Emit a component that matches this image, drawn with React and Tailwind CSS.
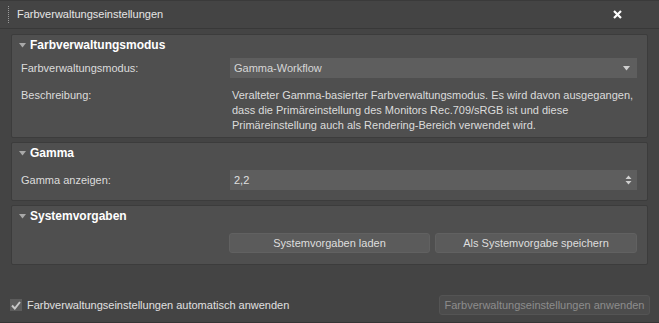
import React from "react";

const font = { fontFamily: '"Liberation Sans", Arial, sans-serif' };

function Tri() {
  return (
    <svg width="7" height="5" viewBox="0 0 7 5" className="shrink-0">
      <path d="M0 0 H7 L3.5 4.5 Z" fill="#a8a8a8" />
    </svg>
  );
}

function Header({ children }) {
  return (
    <div className="h-[20px] flex items-center pl-[7px] gap-[4px]">
      <Tri />
      <span className="text-[12px] font-bold text-white leading-none">{children}</span>
    </div>
  );
}

function Panel({ children, className = "" }) {
  return (
    <div className={"bg-[#4f4f4f] rounded-[2px] border border-[#3c3c3c] " + className}>{children}</div>
  );
}

export default function App() {
  return (
    <div
      className="w-[659px] h-[323px] bg-[#444444] flex flex-col border-t border-[#3a3a3a] border-b border-b-[#353535] text-[#dcdcdc] text-[11px] overflow-hidden whitespace-nowrap"
      style={font}
    >
      {/* Title bar */}
      <div className="h-[28px] flex items-center border-b border-[#383838] relative shrink-0">
        <div className="ml-[8px] w-[1px] h-[17px] border-l border-dotted border-[#9a9a9a]" />
        <span className="ml-[8px] text-[11px] text-[#e6e6e6]">Farbverwaltungseinstellungen</span>
        <div className="ml-auto mr-[37px]">
          <svg width="9" height="9" viewBox="0 0 9 9">
            <path d="M1 1 L8 8 M8 1 L1 8" stroke="#ffffff" strokeWidth="2.2" />
          </svg>
        </div>
      </div>

      <div className="px-[11px] pt-[5px] flex flex-col gap-[4px]">
        {/* Panel 1 */}
        <Panel className="h-[104px]">
          <Header>Farbverwaltungsmodus</Header>
          <div className="flex items-center h-[20px] mt-[3px] pl-[9px] pr-[10px]">
            <span className="w-[209px]">Farbverwaltungsmodus:</span>
            <div className="flex-1 h-[20px] bg-[#5e5e5e] flex items-center pl-[4px] pr-[7px] text-[#d6d6d6]">
              <span>Gamma-Workflow</span>
              <svg width="7" height="5" viewBox="0 0 7 5" className="ml-auto">
                <path d="M0 0 H7 L3.5 4.5 Z" fill="#cfcfcf" />
              </svg>
            </div>
          </div>
          <div className="flex pl-[9px] pr-[10px] mt-[10px]">
            <span className="w-[211px] leading-[15px]">Beschreibung:</span>
            <p className="flex-1 leading-[15px] text-[#dcdcdc]">
              Veralteter Gamma-basierter Farbverwaltungsmodus. Es wird davon ausgegangen,
              <br />
              dass die Primäreinstellung des Monitors Rec.709/sRGB ist und diese
              <br />
              Primäreinstellung auch als Rendering-Bereich verwendet wird.
            </p>
          </div>
        </Panel>

        {/* Panel 2 */}
        <Panel className="h-[59px]">
          <Header>Gamma</Header>
          <div className="flex items-center h-[20px] mt-[7px] pl-[9px] pr-[10px]">
            <span className="w-[209px]">Gamma anzeigen:</span>
            <div className="flex-1 h-[20px] bg-[#5e5e5e] flex items-center pl-[4px] pr-[5px] text-[#e0e0e0]">
              <span>2,2</span>
              <svg width="7" height="10" viewBox="0 0 7 10" className="ml-auto">
                <path d="M0.5 4 H6.5 L3.5 0.5 Z M0.5 6 H6.5 L3.5 9.5 Z" fill="#cfcfcf" />
              </svg>
            </div>
          </div>
        </Panel>

        {/* Panel 3 */}
        <Panel className="h-[60px]">
          <Header>Systemvorgaben</Header>
          <div className="flex items-center h-[20px] mt-[7px] pl-[217px] pr-[10px] gap-[5px]">
            <button className="w-[201px] h-[20px] bg-[#5b5b5b] rounded-[3px] border border-[#616161] text-[#dedede] text-[11px]">
              Systemvorgaben laden
            </button>
            <button className="flex-1 h-[20px] bg-[#5b5b5b] rounded-[3px] border border-[#616161] text-[#dedede] text-[11px]">
              Als Systemvorgabe speichern
            </button>
          </div>
        </Panel>
      </div>

      {/* Footer */}
      <div className="mt-auto mb-[7px] flex items-center pl-[10px] pr-[9px] h-[20px]">
        <div className="w-[12px] h-[12px] bg-[#5c5c5c] flex items-center justify-center">
          <svg width="10" height="9" viewBox="0 0 10 9">
            <path d="M1 4.5 L3.8 7.5 L9 1" stroke="#c8c8c8" strokeWidth="2" fill="none" />
          </svg>
        </div>
        <span className="ml-[5px] text-[#e0e0e0]">Farbverwaltungseinstellungen automatisch anwenden</span>
        <button className="ml-auto w-[211px] h-[20px] bg-[#4c4c4c] rounded-[3px] border border-[#545454] text-[#8c8c8c] text-[11px]">
          Farbverwaltungseinstellungen anwenden
        </button>
      </div>
    </div>
  );
}
